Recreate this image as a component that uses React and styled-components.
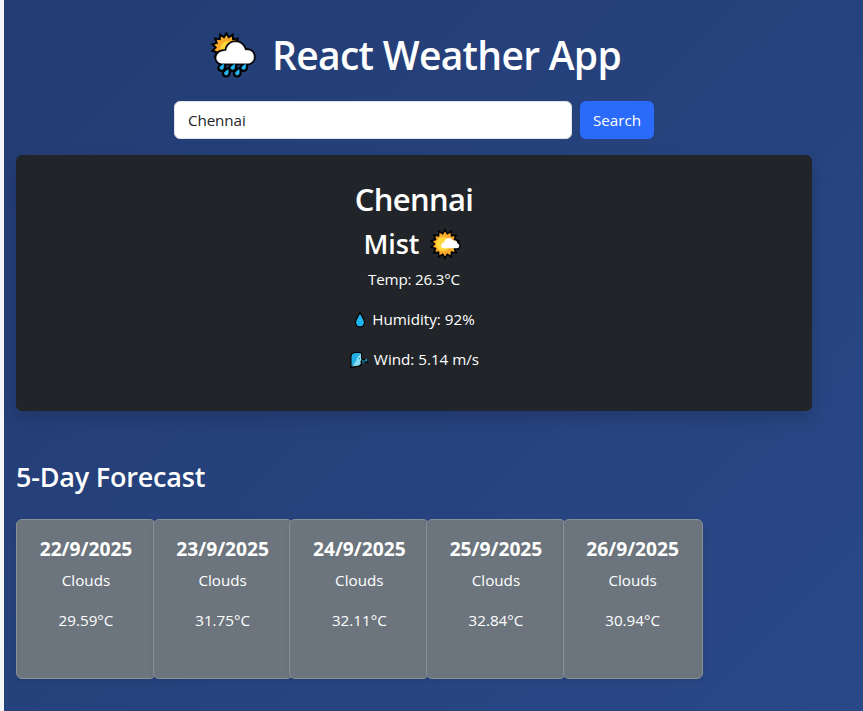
import React from "react";
import styled, { createGlobalStyle } from "styled-components";

const Global = createGlobalStyle`
  *, *::before, *::after { box-sizing: border-box; }
  body {
    margin: 0;
    background: #f4f6f9;
    font: 400 16px/24px "Open Sans", "Noto Sans", sans-serif;
    color: #fff;
    overflow: hidden;
  }
  h1, h2, h3, h5, p { margin: 0; white-space: nowrap; }
`;

const Page = styled.div`
  height: 711px;
  margin-left: 4px;
  padding: 31px 0 0 12px;
  background: linear-gradient(135deg, #233c73 0%, #294887 100%);
`;

const Container = styled.main`
  width: 796px;
  display: flex;
  flex-direction: column;
`;

const Title = styled.h1`
  display: flex;
  align-items: center;
  height: 48px;
  margin: 0 0 22px 194px;
  font-size: 39px;
  font-weight: 600;
  line-height: 48px;
  letter-spacing: -0.7px;
  svg { margin: 2px 15px 0 0; flex: none; }
`;

const SearchForm = styled.form`
  display: flex;
  gap: 8px;
  width: 480px;
  margin: 0 auto 16px 158px;
`;

const CityInput = styled.input`
  width: 398px;
  height: 38px;
  padding: 6px 13px;
  border: 1px solid #dee2e6;
  border-radius: 6px;
  background: #fff;
  color: #212529;
  font: 400 15.2px/24px "Open Sans", "Noto Sans", sans-serif;
  letter-spacing: -0.1px;
  outline: 0;
`;

const SearchButton = styled.button`
  width: 74px;
  height: 38px;
  padding: 0;
  border: 0;
  border-radius: 6px;
  background: #2b6bfb;
  color: #fff;
  font: 400 15.2px/24px "Open Sans", "Noto Sans", sans-serif;
`;

const CurrentCard = styled.section`
  height: 256px;
  padding: 25px 0 0;
  border-radius: 6px;
  background: #212529;
  box-shadow: 0 8px 16px rgba(0, 0, 0, 0.15);
  display: flex;
  flex-direction: column;
  align-items: center;
`;

const City = styled.h2`
  height: 47px;
  font-size: 31px;
  font-weight: 600;
  line-height: 38px;
  letter-spacing: -0.65px;
`;

const Condition = styled.h3`
  display: flex;
  align-items: center;
  height: 34px;
  margin-bottom: 6px;
  font-size: 27px;
  font-weight: 600;
  line-height: 34px;
  letter-spacing: -0.1px;
  svg { margin: 0 3px 0 10px; }
`;

const Detail = styled.p`
  display: flex;
  align-items: center;
  height: 24px;
  margin-bottom: 16px;
  font-size: 15.2px;
  font-weight: 500;
  letter-spacing: ${(p) => p.$track || "0"};
  svg { margin: 2px 5px 0 1px; }
`;

const ForecastTitle = styled.h3`
  margin-top: 49px;
  height: 59px;
  font-size: 27px;
  font-weight: 600;
  line-height: 34px;
  letter-spacing: -0.2px;
`;

const ForecastGrid = styled.section`
  display: grid;
  grid-template-columns: repeat(5, 136.67px);
`;

const DayCard = styled.article`
  width: 140px;
  height: 160px;
  padding: 16px 0 0;
  border: 1px solid #899194;
  border-radius: 6px;
  background: #6c757d;
  box-shadow: 0 2px 4px rgba(0, 0, 0, 0.075);
  text-align: center;
`;

const DayDate = styled.h5`
  height: 32px;
  font-size: 19.2px;
  font-weight: 700;
  line-height: 25px;
`;

const DayText = styled.p`
  height: 24px;
  margin-bottom: 16px;
  font-size: 15.2px;
`;

const starPoints = (outer, inner) =>
  Array.from({ length: 28 }, (_, i) => {
    const r = i % 2 ? inner : outer;
    const a = (i * Math.PI) / 14;
    return `${(16 + r * Math.sin(a)).toFixed(2)},${(16 - r * Math.cos(a)).toFixed(2)}`;
  }).join(" ");

const SPIKES = starPoints(15.8, 11.6);
const INNER = starPoints(12.4, 9.4);

const DROPS = [[11.7, 32], [22.7, 32], [33.7, 32], [16.2, 37.6], [27.2, 37.6]];
const dropPath = "M1.9 0 C0.5 1.2 -2 2.2 -2 3.9 A2 2 0 0 0 1.8 4.3 Q2.4 2.3 1.9 0Z";
const cloudPath =
  "M12.5 31.3 C5 31.3 4.5 21.5 12 19.5 C14.5 19 15.5 19 16.5 18.8 C17.5 7.5 33 7.5 35 18.5 C41 17.5 43.7 21 43.7 25 C43.7 29 41 31.3 37.5 31.3Z";

function RainCloud() {
  return (
    <svg width="47" height="48" viewBox="0 0 47 48">
      <g transform="translate(0.4 -0.4)">
        <polygon points={SPIKES} fill="#000" stroke="#000" strokeWidth="0.6" />
        <polygon points={INNER} fill="#fbab2b" />
        <circle cx="17" cy="17" r="7" fill="#ffd83b" />
      </g>
      <path d={cloudPath} fill="#000" stroke="#000" strokeWidth="4" />
      <g fill="#000" stroke="#000" strokeWidth="5" strokeLinejoin="round">
        {DROPS.map(([x, y]) => (
          <path key={`${x}-${y}`} d={dropPath} transform={`translate(${x} ${y})`} />
        ))}
      </g>
      <path d={cloudPath} fill="#fff" stroke="#fff" strokeWidth="0.5" />
      {DROPS.map(([x, y]) => (
        <path key={`${x}-${y}`} d={dropPath} fill="#25b7f3" stroke="#25b7f3" strokeWidth="0.5" transform={`translate(${x} ${y})`} />
      ))}
    </svg>
  );
}

const smallCloud = "M15 20.3 C11 20.3 11 15 15 14.5 C16 9.5 22 8.5 24 12.6 C26.5 11.8 28.3 13.6 28.3 15.3 C31 16 31 20.3 28 20.3Z";

function SunCloud() {
  return (
    <svg width="32" height="32" viewBox="0 0 32 32">
      <polygon points={SPIKES} fill="#000" />
      <path d="M21 22 H28 C33 21 32 14 29 13.5 L26 11Z" fill="#000" />
      <polygon points={INNER} fill="#fbab2b" />
      <circle cx="14" cy="16" r="7" fill="#ffd83b" />
      <path d={smallCloud} fill="#fff" />
    </svg>
  );
}

function Droplet() {
  return (
    <svg width="13" height="18" viewBox="0 0 13 18">
      <path d="M6 1.5 C4.5 5 1.5 7.8 1.5 11.2 A4.5 4.8 0 0 0 10.5 11.2 C10.5 7.8 7.5 5 6 1.5Z" fill="#1eb4f0" stroke="#000" strokeWidth="1.3" />
    </svg>
  );
}

function WindFace() {
  return (
    <svg width="19" height="18" viewBox="0 0 19 18">
      <path d="M0.5 16.5 V6 Q0.5 1 6 1 H11 Q12.5 2 12 6 L13 8 H16.5 L18 9.5 L17 12.5 H12.5 Q11 16 8 16 L1 17Z" fill="#000" />
      <path d="M1.5 15.5 V6 Q1.5 2 6 2 H11 Q8 4 7.5 8 Q5 12 1.5 15.5Z" fill="#20aee5" />
      <path d="M11 2.5 Q7 5 6.5 9 L2 15.5 L9 14.5 L11 12.5 L10.3 10.5 L11.5 9 L11 6Z" fill="#84dcf6" />
      <path d="M12 10 H16 M12.5 12 H14.5 M15.5 8.2 Q17.5 9 16 10" fill="none" stroke="#28b5e5" strokeWidth="1.2" />
      <circle cx="9.3" cy="7.6" r="0.7" fill="#197b9f" />
    </svg>
  );
}

const DAYS = [
  ["22/9/2025", "29.59°C"],
  ["23/9/2025", "31.75°C"],
  ["24/9/2025", "32.11°C"],
  ["25/9/2025", "32.84°C"],
  ["26/9/2025", "30.94°C"],
];

export default function App() {
  return (
    <>
      <Global />
      <Page>
        <Container>
          <Title><RainCloud />React Weather App</Title>
          <SearchForm onSubmit={(e) => e.preventDefault()}>
            <CityInput defaultValue="Chennai" aria-label="City" />
            <SearchButton>Search</SearchButton>
          </SearchForm>
          <CurrentCard>
            <City>Chennai</City>
            <Condition>Mist<SunCloud /></Condition>
            <Detail $track="-0.2px">Temp: 26.3°C</Detail>
            <Detail><Droplet />Humidity: 92%</Detail>
            <Detail><WindFace />Wind: 5.14 m/s</Detail>
          </CurrentCard>
          <ForecastTitle>5-Day Forecast</ForecastTitle>
          <ForecastGrid>
            {DAYS.map(([date, temp]) => (
              <DayCard key={date}>
                <DayDate>{date}</DayDate>
                <DayText>Clouds</DayText>
                <DayText>{temp}</DayText>
              </DayCard>
            ))}
          </ForecastGrid>
        </Container>
      </Page>
    </>
  );
}
